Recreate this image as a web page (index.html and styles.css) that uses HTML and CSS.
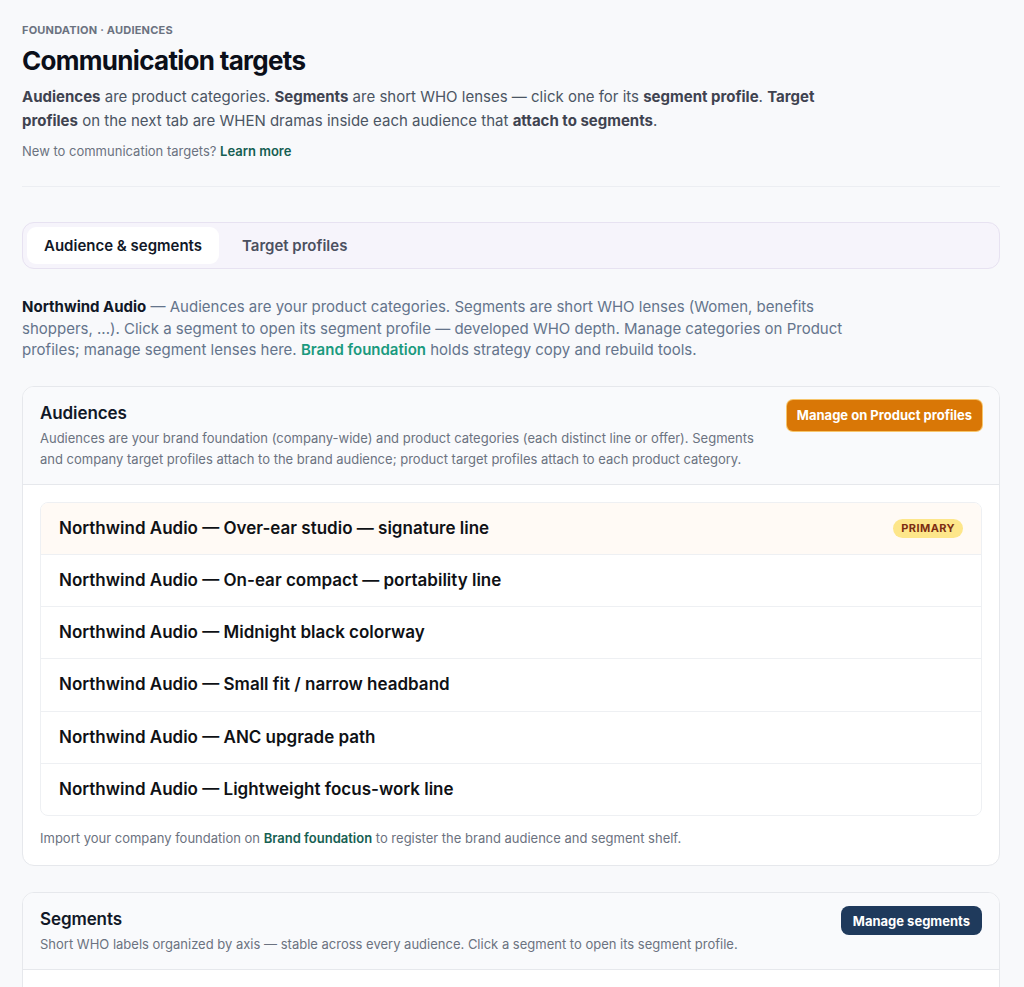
FILE: index.html
```html
<!DOCTYPE html>
<html lang="en">
<head>
<meta charset="utf-8">
<title>Communication targets</title>
<link rel="stylesheet" href="styles.css">
</head>
<body>
<main class="page">
  <header class="page-head">
    <div class="eyebrow">FOUNDATION · AUDIENCES</div>
    <h1 class="title">Communication targets</h1>
    <p class="lead"><b>Audiences</b> are product categories. <b>Segments</b> are short WHO lenses — click one for its <b>segment profile</b>. <b>Target profiles</b> on the next tab are WHEN dramas inside each audience that <b>attach to segments</b>.</p>
    <p class="learn">New to communication targets? <a class="learn-link" href="#">Learn more</a></p>
  </header>

  <nav class="tabs">
    <span class="tab tab-active">Audience &amp; segments</span>
    <span class="tab">Target profiles</span>
  </nav>

  <p class="intro"><b>Northwind Audio</b> — Audiences are your product categories. Segments are short WHO lenses (Women, benefits shoppers, ...). Click a segment to open its segment profile — developed WHO depth. Manage categories on Product profiles; manage segment lenses here. <a class="intro-link" href="#">Brand foundation</a> holds strategy copy and rebuild tools.</p>

  <section class="card">
    <div class="card-head">
      <div class="card-text">
        <h2 class="card-title">Audiences</h2>
        <p class="card-desc">Audiences are your brand foundation (company-wide) and product categories (each distinct line or offer). Segments and company target profiles attach to the brand audience; product target profiles attach to each product category.</p>
      </div>
      <button class="btn btn-amber">Manage on Product profiles</button>
    </div>
    <div class="card-body">
      <ul class="list">
        <li class="row row-primary"><span>Northwind Audio — Over-ear studio — signature line</span><span class="badge">PRIMARY</span></li>
        <li class="row"><span>Northwind Audio — On-ear compact — portability line</span></li>
        <li class="row"><span>Northwind Audio — Midnight black colorway</span></li>
        <li class="row"><span>Northwind Audio — Small fit / narrow headband</span></li>
        <li class="row"><span>Northwind Audio — ANC upgrade path</span></li>
        <li class="row"><span>Northwind Audio — Lightweight focus-work line</span></li>
      </ul>
      <p class="foot">Import your company foundation on <a class="foot-link" href="#">Brand foundation</a> to register the brand audience and segment shelf.</p>
    </div>
  </section>

  <section class="card">
    <div class="card-head">
      <div class="card-text">
        <h2 class="card-title">Segments</h2>
        <p class="card-desc">Short WHO labels organized by axis — stable across every audience. Click a segment to open its segment profile.</p>
      </div>
      <button class="btn btn-navy">Manage segments</button>
    </div>
    <div class="card-body">
      <div class="placeholder"></div>
    </div>
  </section>
</main>
</body>
</html>
```

FILE: styles.css
```css
* { box-sizing: border-box; }
html, body { margin: 0; padding: 0; }
body {
  background: #f8f9fb;
  font-family: Inter, "Noto Sans", sans-serif;
  color: #111827;
}
.page {
  padding: 22px 24px 40px 22px;
  display: flex;
  flex-direction: column;
}
.page-head {
  border-bottom: 1px solid #eceef2;
  padding-bottom: 25px;
  margin-bottom: 35px;
}
.eyebrow {
  font-size: 11px;
  line-height: 16px;
  font-weight: 700;
  color: #6b7280;
  letter-spacing: 0.2px;
}
.title {
  margin: 7px 0 0;
  font-size: 26px;
  line-height: 32px;
  font-weight: 700;
  letter-spacing: -0.7px;
  color: #0b0f19;
}
.lead {
  margin: 8px 0 0;
  max-width: 820px;
  font-size: 15px;
  line-height: 24px;
  color: #4b5563;
}
.lead b { color: #3f4350; font-weight: 700; }
.learn {
  margin: 8px 0 0;
  font-size: 13px;
  line-height: 20px;
  color: #6b7280;
}
.learn-link {
  color: #155e52;
  font-weight: 600;
  text-decoration: none;
}
.tabs {
  display: flex;
  gap: 6px;
  padding: 4px;
  border: 1px solid #e7e2f1;
  background: #f6f4fb;
  border-radius: 12px;
}
.tab {
  padding: 0 17px;
  height: 37px;
  display: flex;
  align-items: center;
  font-size: 15px;
  font-weight: 600;
  color: #4b5060;
  border-radius: 9px;
}
.tab-active {
  background: #ffffff;
  color: #111827;
}
.intro {
  margin: 27px 0 25px;
  max-width: 830px;
  font-size: 15px;
  line-height: 21.5px;
  color: #64748b;
}
.intro b { color: #111827; font-weight: 700; }
.intro-link {
  color: #1a9a7e;
  font-weight: 600;
  text-decoration: none;
}
.card {
  background: #ffffff;
  border: 1px solid #e6e8ec;
  border-radius: 12px;
  margin-bottom: 26px;
  overflow: hidden;
}
.card-head {
  display: flex;
  justify-content: space-between;
  align-items: flex-start;
  gap: 20px;
  background: #f9fafc;
  border-bottom: 1px solid #e6e8ec;
  padding: 13px 17px 14px 17px;
}
.card-text { max-width: 730px; padding-top: 1px; }
.card-title {
  margin: 0;
  font-size: 17px;
  line-height: 24px;
  font-weight: 600;
  color: #111827;
  letter-spacing: -0.1px;
}
.card-desc {
  margin: 3px 0 0;
  font-size: 13px;
  line-height: 21px;
  color: #6b7280;
}
.btn {
  flex: none;
  border: none;
  font-family: inherit;
  font-size: 13px;
  font-weight: 700;
  color: #ffffff;
  border-radius: 6px;
  padding: 0 10px;
  cursor: pointer;
}
.btn-amber {
  background: #d97706;
  height: 31px;
  box-shadow: 0 0 0 1px #f6c56b;
}
.btn-navy {
  background: #1f3a5c;
  height: 29px;
  padding: 0 12px;
  border-radius: 8px;
}
.card-body {
  padding: 17px 17px 17px 17px;
}
.list {
  list-style: none;
  margin: 0;
  padding: 0;
  border: 1px solid #eef0f3;
  border-radius: 8px;
  overflow: hidden;
}
.row {
  display: flex;
  justify-content: space-between;
  align-items: center;
  padding: 14px 18px;
  font-size: 17px;
  line-height: 23.3px;
  font-weight: 600;
  color: #0f1115;
  border-bottom: 1px solid #eef0f3;
}
.row:last-child { border-bottom: none; }
.row-primary { background: #fffaf5; }
.badge {
  background: #fde68a;
  color: #7c2d12;
  font-size: 11px;
  line-height: 19px;
  font-weight: 700;
  padding: 0 8px;
  border-radius: 999px;
  letter-spacing: 0.4px;
}
.foot {
  margin: 12px 0 0;
  font-size: 13px;
  line-height: 20px;
  color: #6b7280;
}
.foot-link {
  color: #166052;
  font-weight: 600;
  text-decoration: none;
}
.placeholder { height: 60px; }
```
